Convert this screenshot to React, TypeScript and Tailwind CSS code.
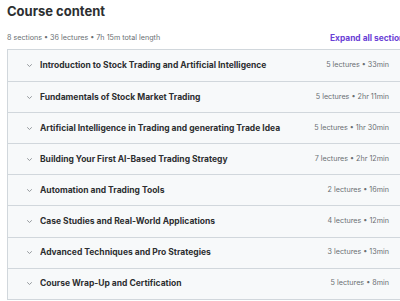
import React from 'react';

const SECTIONS = [
    { title: 'Introduction to Stock Trading and Artificial Intelligence', lectures: 5, length: '33min' },
    { title: 'Fundamentals of Stock Market Trading', lectures: 5, length: '2hr 11min' },
    { title: 'Artificial Intelligence in Trading and generating Trade Idea', lectures: 5, length: '1hr 30min' },
    { title: 'Building Your First AI-Based Trading Strategy', lectures: 7, length: '2hr 12min' },
    { title: 'Automation and Trading Tools', lectures: 2, length: '16min' },
    { title: 'Case Studies and Real-World Applications', lectures: 4, length: '12min' },
    { title: 'Advanced Techniques and Pro Strategies', lectures: 3, length: '13min' },
    { title: 'Course Wrap-Up and Certification', lectures: 5, length: '8min' },
];

function Chevron() {
    return (
        <svg width="7" height="5" viewBox="0 0 7 5" className="shrink-0">
            <path d="M1.2 1.3 L3.5 3.5 L5.8 1.3" fill="none" stroke="#8a8f93" strokeWidth="0.9" />
        </svg>
    );
}

export default function App() {
    return (
        <div className="w-[400px] h-[301px] overflow-hidden bg-white text-[#2d2f31] font-['Inter',sans-serif]">
            <div className="w-[405px] ml-[7px]">
                {/* Heading */}
                <h2 className="text-[13px] leading-[20px] font-bold pt-[1px]">Course content</h2>

                {/* Summary row */}
                <div className="flex items-center justify-between h-[16px] mt-[9px] mb-[3px] pr-[3px]">
                    <span className="text-[7.2px] text-[#6a6f73]">8 sections • 36 lectures • 7h 15m total length</span>
                    <span className="text-[8.4px] font-bold text-[#6a3fd6] whitespace-nowrap">Expand all sections</span>
                </div>

                {/* Sections */}
                <div className="border border-[#d1d7dc]">
                    {SECTIONS.map((s, i) => (
                        <div
                            key={s.title}
                            className={`flex items-center h-[31.1px] bg-[#f7f9fa] pl-[18px] pr-[22px] ${i > 0 ? 'border-t border-[#d1d7dc]' : ''}`}
                        >
                            <Chevron />
                            <span className="ml-[7px] flex-1 text-[8.5px] font-bold truncate">{s.title}</span>
                            <span className="text-[7.2px] text-[#6a6f73] whitespace-nowrap">
                                {s.lectures} lectures • {s.length}
                            </span>
                        </div>
                    ))}
                </div>
            </div>
        </div>
    );
}
